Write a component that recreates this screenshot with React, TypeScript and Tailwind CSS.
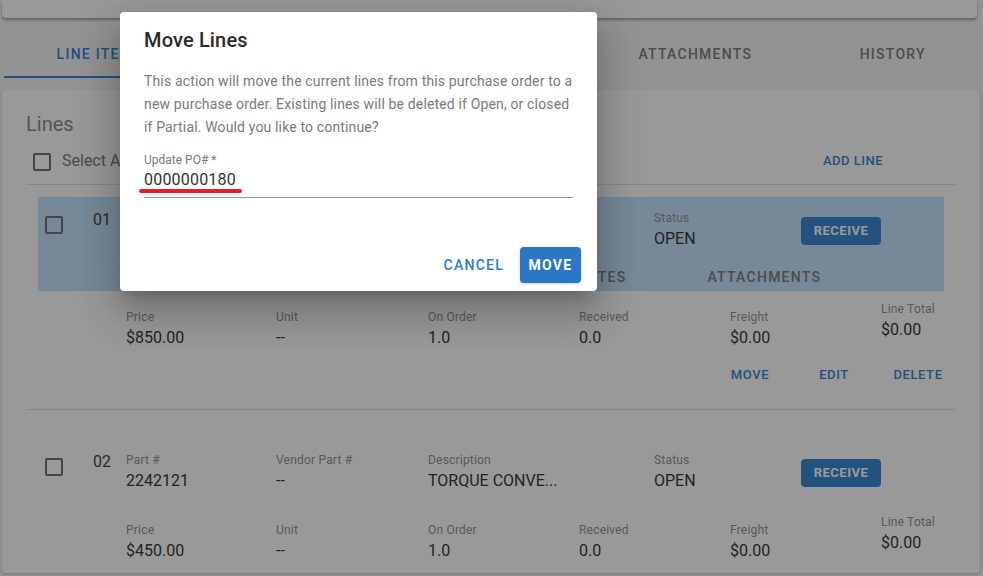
import React from "react";

const Checkbox = ({ className }: { className: string }) => (
  <div className={className}>
    <div className="w-[18px] h-[18px] rounded-[2px] border-2 border-[#747474]" />
  </div>
);

const Field = ({ label, value, w, extra }: { label: string; value: string; w: string; extra?: string }) => (
  <div className={`${w} ${extra ?? ""} shrink-0`}>
    <div className="text-[12px] leading-[14px] text-[#959595] tracking-[0.2px]">{label}</div>
    <div className="mt-[3px] text-[16px] leading-[22px] text-[#3a3a3a] whitespace-nowrap">{value}</div>
  </div>
);

const ReceiveBtn = ({ className }: { className: string }) => (
  <div className={className}>
    <div className="w-[80px] h-[28px] rounded-[4px] bg-[#3d89d4] text-white text-[13px] font-bold tracking-[0.5px] flex items-center justify-center">
      RECEIVE
    </div>
  </div>
);

const TopRow = ({ num, part, vendor, desc }: { num: string; part: string; vendor: string; desc: string }) => (
  <div className="flex items-start">
    <Checkbox className="ml-[7px] mt-[19px]" />
    <div className="ml-[30px] mt-[13px] text-[16px] leading-[20px] text-[#454545] w-[33px]">{num}</div>
    <Field w="w-[150px]" extra="mt-[14px]" label="Part #" value={part} />
    <Field w="w-[152px]" extra="mt-[14px]" label="Vendor Part #" value={vendor} />
    <Field w="w-[226px]" extra="mt-[14px]" label="Description" value={desc} />
    <Field w="w-[147px]" extra="mt-[14px]" label="Status" value="OPEN" />
    <ReceiveBtn className="mt-[20px]" />
  </div>
);

const BottomRow = ({ price, className }: { price: string; className: string }) => (
  <div className={`flex items-start pl-[88px] ${className}`}>
    <Field w="w-[150px]" label="Price" value={price} />
    <Field w="w-[152px]" label="Unit" value="--" />
    <Field w="w-[151px]" label="On Order" value="1.0" />
    <Field w="w-[151px]" label="Received" value="0.0" />
    <Field w="w-[151px]" label="Freight" value="$0.00" />
    <Field w="w-[70px]" extra="-mt-[8px]" label="Line Total" value="$0.00" />
  </div>
);

const Tab = ({ label, active }: { label: string; active?: boolean }) => (
  <div className="w-[197.5px] shrink-0 h-[48px] relative flex items-center justify-center">
    <span
      className={`text-[14px] font-medium tracking-[1.25px] ${active ? "text-[#3d86d6] pr-[6px]" : "text-[#7f7f7f]"}`}
    >
      {label}
    </span>
    {active && <div className="absolute left-0 right-0 bottom-0 h-[2px] bg-[#3d86d6]" />}
  </div>
);

export default function App() {
  return (
    <div className="relative w-[983px] h-[576px] overflow-hidden bg-[#f5f5f5] font-['Roboto','Liberation_Sans',sans-serif]">
      {/* top card */}
      <div className="ml-[2px] w-[975px] h-[18px] bg-white rounded-b-[4px] shadow-[0_2px_3px_rgba(0,0,0,0.35)]" />

      {/* tabs */}
      <div className="mt-[12px] ml-[4px] flex overflow-hidden w-[979px]">
        <Tab label="LINE ITEMS" active />
        <Tab label="RECEIVING" />
        <Tab label="NOTES" />
        <Tab label="ATTACHMENTS" />
        <Tab label="HISTORY" />
      </div>

      {/* lines card */}
      <div className="mt-[12px] ml-[2px] w-[978px] h-[483px] bg-white rounded-[4px] shadow-[0_1px_3px_rgba(0,0,0,0.2)] px-[24px] pt-[22px] overflow-hidden">
        <div className="text-[20px] leading-[24px] text-[#8e8e8e]">Lines</div>
        <div className="mt-[10px] h-[30px] flex items-center">
          <Checkbox className="ml-[7px] mt-[1px]" />
          <span className="ml-[11px] text-[16px] text-[#7d7d7d]">Select All</span>
          <span className="ml-auto mr-[73px] text-[13px] font-medium tracking-[0.5px] text-[#3d86d6]">ADD LINE</span>
        </div>
        <div className="mt-[8px] h-px bg-[#e2e2e2] w-[929px]" />

        {/* row 1 */}
        <div className="ml-[12px] w-[906px]">
          <div className="mt-[12px] bg-[#c6e4fd] pb-[6px]">
            <TopRow num="01" part="2242120" vendor="--" desc="TORQUE CONVE..." />
            <div className="mt-[19px] flex text-[14px] leading-[16px] font-medium tracking-[1.25px] text-[#7f7f7f]">
              <span className="ml-[538px]">NOTES</span>
              <span className="ml-[81px]">ATTACHMENTS</span>
            </div>
          </div>
          <BottomRow price="$850.00" className="mt-[19px]" />
          <div className="mt-[18px] flex justify-end mr-[-6px] gap-[20px] text-[13px] leading-[16px] font-medium tracking-[0.6px] text-[#3d86d6]">
            <span className="min-w-[64px] text-center">MOVE</span>
            <span className="min-w-[64px] text-center">EDIT</span>
            <span className="min-w-[64px] text-center">DELETE</span>
          </div>
        </div>
        <div className="mt-[26px] h-px bg-[#e2e2e2] w-[929px]" />

        {/* row 2 */}
        <div className="ml-[12px] w-[906px] mt-[29px]">
          <TopRow num="02" part="2242121" vendor="--" desc="TORQUE CONVE..." />
          <BottomRow price="$450.00" className="mt-[31px]" />
        </div>
      </div>

      {/* backdrop */}
      <div className="absolute inset-0 bg-black/40" />

      {/* dialog */}
      <div className="absolute left-[120px] top-[12px] w-[477px] h-[279px] bg-white rounded-[4px] shadow-[0_11px_15px_-7px_rgba(0,0,0,0.2),0_24px_38px_3px_rgba(0,0,0,0.14),0_9px_46px_8px_rgba(0,0,0,0.12)] flex flex-col">
        <div className="px-[24px] pt-[12px]">
          <div className="text-[20px] leading-[32px] font-medium text-[#2a2a2a] tracking-[0.15px]">Move Lines</div>
          <div className="mt-[14px] text-[14px] leading-[23px] text-[#7a7a7a] tracking-[0.15px] whitespace-nowrap">
            This action will move the current lines from this purchase order to a
            <br />
            new purchase order. Existing lines will be deleted if Open, or closed
            <br />
            if Partial. Would you like to continue?
          </div>
          <div className="mt-[14px] text-[12px] leading-[14px] text-[#7a7a7a]">Update PO# *</div>
          <div className="mt-[3px] pb-[7px] border-b border-[#949494] text-[16px] leading-[20px]">
            <span className="relative block w-fit leading-[20px] text-[#333333] tracking-[0.2px]">
              0000000180
              <span className="absolute left-[-5px] bottom-[-3px] w-[103px] h-[4px] rounded-full bg-[#ed1c24]" />
            </span>
          </div>
        </div>
        <div className="mt-auto pb-[8px] pr-[16px] flex justify-end items-center gap-[8px]">
          <div className="h-[36px] px-[8px] flex items-center text-[14px] font-medium tracking-[1.25px] text-[#2b7bd0]">CANCEL</div>
          <div className="h-[36px] w-[61px] rounded-[4px] bg-[#2a77c6] flex items-center justify-center text-[14px] font-bold tracking-[1.25px] text-white shadow-[0_1px_3px_rgba(0,0,0,0.2)]">
            MOVE
          </div>
        </div>
      </div>
    </div>
  );
}
